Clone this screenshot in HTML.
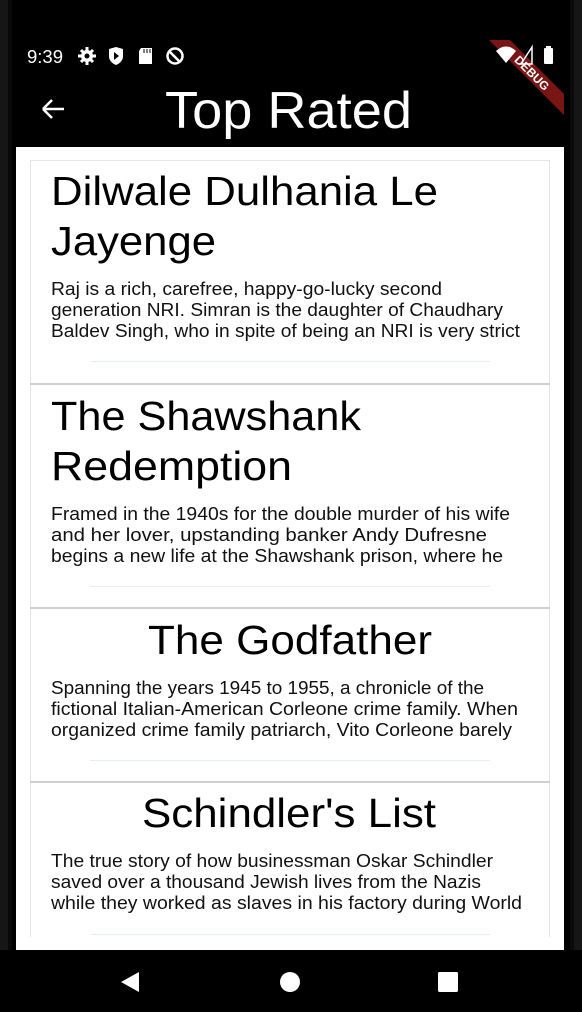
<!DOCTYPE html>
<html><head><meta charset="utf-8"><style>
html,body{margin:0;padding:0;background:#000;}
svg{display:block}
text{font-family:"Liberation Sans",sans-serif;}
</style></head><body>
<svg width="582" height="1012" viewBox="0 0 582 1012" xmlns="http://www.w3.org/2000/svg">
<rect width="582" height="1012" fill="#000"/>
<rect x="0" y="0" width="8" height="1012" fill="#161616"/>
<rect x="574" y="0" width="8" height="1012" fill="#161616"/>
<rect x="8" y="0" width="4" height="1012" fill="#0a0a0a"/>
<rect x="570" y="0" width="4" height="1012" fill="#0a0a0a"/>
<!-- debug ribbon -->
<polygon points="489,40 510,40 564,94 564,115" fill="#7a1515"/>
<text x="0" y="0" font-size="12" font-weight="bold" fill="#fff" text-anchor="middle" transform="translate(529,76) rotate(45)">DEBUG</text>
<!-- status bar -->
<text x="27" y="63" font-size="18" fill="#fff" textLength="36" lengthAdjust="spacingAndGlyphs">9:39</text>
<g fill="#fff">
<circle cx="87" cy="56" r="6"/>
<g stroke="#fff" stroke-width="3"><line x1="87" y1="47" x2="87" y2="65"/><line x1="78" y1="56" x2="96" y2="56"/><line x1="81" y1="50" x2="93" y2="62"/><line x1="93" y1="50" x2="81" y2="62"/></g>
<circle cx="87" cy="56" r="2.5" fill="#000"/>
<path d="M109 49 L116 47 L123 49 L123 56 Q123 62 116 65 Q109 62 109 56 Z"/>
<path d="M114 52 L119 56 L114 60 Z" fill="#000"/>
<path d="M141 48 L152 48 L152 64 L139 64 L139 51 Z"/>
<path d="M144 49 v4 M147 49 v4 M150 49 v4" stroke="#000" stroke-width="1"/>
<circle cx="175" cy="56" r="7.5" fill="none" stroke="#fff" stroke-width="2.5"/>
<path d="M170 52 L179 61" stroke="#fff" stroke-width="2.5"/>
<path d="M496 51 Q506 42 516 51 L506 63 Z"/>
<path d="M532 47 L532 64 L521 64 Z" fill="none" stroke="#fff" stroke-width="1.5"/>
<rect x="544" y="48" width="9" height="16" rx="1"/>
<rect x="546" y="46" width="5" height="3"/>
</g>
<!-- app bar -->
<path d="M43 109 H64 M43 109 L52 100 M43 109 L52 118" stroke="#fff" stroke-width="2.5" fill="none"/>
<text x="165" y="128" font-size="52" fill="#fff" textLength="247" lengthAdjust="spacingAndGlyphs">Top Rated</text>
<!-- content -->
<rect x="16" y="147" width="548" height="803" fill="#fff"/>
<rect x="30.5" y="160.5" width="519" height="820" fill="#fff" stroke="#e4e4e4"/>
<rect x="30" y="383" width="520" height="2" fill="#d0d0d0"/>
<rect x="30" y="607" width="520" height="2" fill="#d0d0d0"/>
<rect x="30" y="781" width="520" height="2" fill="#d0d0d0"/>
<rect x="16" y="937" width="548" height="13" fill="#fff"/>
<rect x="0" y="950" width="582" height="62" fill="#000"/>
<g fill="#e3eefb">
<rect x="90" y="361" width="400" height="1"/>
<rect x="90" y="586" width="400" height="1"/>
<rect x="90" y="760" width="400" height="1"/>
<rect x="90" y="934" width="400" height="1"/>
</g>
<g fill="#000" font-size="41">
<text x="51" y="205" textLength="387" lengthAdjust="spacingAndGlyphs">Dilwale Dulhania Le</text>
<text x="51" y="255" textLength="165" lengthAdjust="spacingAndGlyphs">Jayenge</text>
<text x="51" y="430" textLength="310" lengthAdjust="spacingAndGlyphs">The Shawshank</text>
<text x="51" y="480" textLength="241" lengthAdjust="spacingAndGlyphs">Redemption</text>
<text x="148" y="654" textLength="284" lengthAdjust="spacingAndGlyphs">The Godfather</text>
<text x="142" y="827" textLength="294" lengthAdjust="spacingAndGlyphs">Schindler's List</text>
</g>
<g fill="#111" font-size="18">
<text x="51" y="295" textLength="391" lengthAdjust="spacingAndGlyphs">Raj is a rich, carefree, happy-go-lucky second</text>
<text x="51" y="316" textLength="452" lengthAdjust="spacingAndGlyphs">generation NRI. Simran is the daughter of Chaudhary</text>
<text x="51" y="337" textLength="469" lengthAdjust="spacingAndGlyphs">Baldev Singh, who in spite of being an NRI is very strict</text>
<text x="51" y="520" textLength="459" lengthAdjust="spacingAndGlyphs">Framed in the 1940s for the double murder of his wife</text>
<text x="51" y="541" textLength="436" lengthAdjust="spacingAndGlyphs">and her lover, upstanding banker Andy Dufresne</text>
<text x="51" y="562" textLength="452" lengthAdjust="spacingAndGlyphs">begins a new life at the Shawshank prison, where he</text>
<text x="51" y="694" textLength="433" lengthAdjust="spacingAndGlyphs">Spanning the years 1945 to 1955, a chronicle of the</text>
<text x="51" y="715" textLength="467" lengthAdjust="spacingAndGlyphs">fictional Italian-American Corleone crime family. When</text>
<text x="51" y="736" textLength="461" lengthAdjust="spacingAndGlyphs">organized crime family patriarch, Vito Corleone barely</text>
<text x="51" y="867" textLength="442" lengthAdjust="spacingAndGlyphs">The true story of how businessman Oskar Schindler</text>
<text x="51" y="888" textLength="430" lengthAdjust="spacingAndGlyphs">saved over a thousand Jewish lives from the Nazis</text>
<text x="51" y="909" textLength="471" lengthAdjust="spacingAndGlyphs">while they worked as slaves in his factory during World</text>
</g>
<!-- nav bar -->
<g fill="#fff">
<path d="M121 982 L139 972 L139 992 Z"/>
<circle cx="290" cy="982" r="10"/>
<rect x="438" y="972" width="20" height="20" rx="1.5"/>
</g>
</svg>
</body></html>
